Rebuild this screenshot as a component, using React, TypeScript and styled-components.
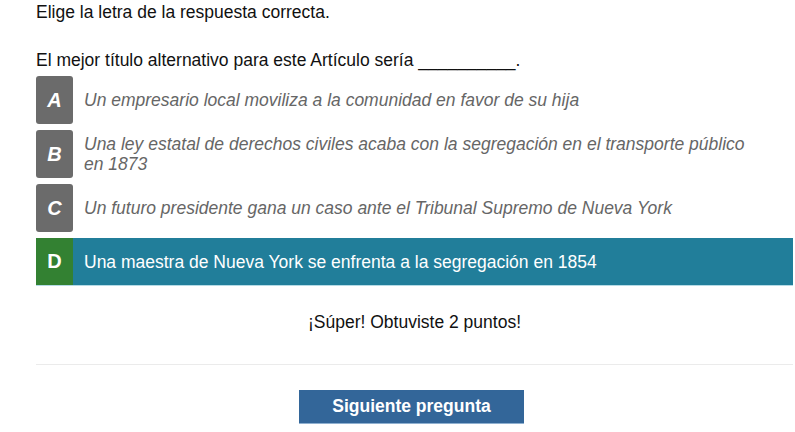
import styled, { createGlobalStyle, css } from 'styled-components'

const GlobalStyle = createGlobalStyle`
  body {
    margin: 0;
    background: #fff;
    font-family: "Liberation Sans", Arial, sans-serif;
    color: #111;
  }
`

const Quiz = styled.div`
  width: 757px;
  padding: 2px 0 0 36px;
  font-size: 17.5px;
`

const Prompt = styled.p`
  margin: 0;
  line-height: 20px;
`

const Question = styled.p`
  margin: 28px 0 6px;
  line-height: 20px;
`

const Options = styled.div`
  display: flex;
  flex-direction: column;
  gap: 6px;
`

const Option = styled.div<{ $correct?: boolean }>`
  display: grid;
  grid-template-columns: 37px 1fr;
  align-items: stretch;
  min-height: 48px;
  ${(p) =>
    p.$correct &&
    css`
      background: #217e9a;
      border-bottom: 1px solid #b5dbe6;
      min-height: 47px;
    `}
`

const Badge = styled.div<{ $correct?: boolean }>`
  display: flex;
  align-items: center;
  justify-content: center;
  background: ${(p) => (p.$correct ? '#338132' : '#6b6b6b')};
  border-radius: ${(p) => (p.$correct ? '0' : '3px')};
  color: #fff;
  font-weight: bold;
  font-style: ${(p) => (p.$correct ? 'normal' : 'italic')};
  font-size: 20px;
`

const OptionText = styled.div<{ $correct?: boolean }>`
  display: flex;
  align-items: center;
  padding: 0 40px 0 11px;
  line-height: 20px;
  font-style: ${(p) => (p.$correct ? 'normal' : 'italic')};
  color: ${(p) => (p.$correct ? '#fff' : '#666')};
`

const Feedback = styled.p`
  margin: 26px 0 0;
  text-align: center;
  line-height: 20px;
`

const Rule = styled.hr`
  margin: 32px 0 0;
  border: 0;
  border-top: 1px solid #ebebeb;
`

const Footer = styled.div`
  display: flex;
  justify-content: center;
  padding-top: 25px;
`

const NextButton = styled.button`
  width: 225px;
  height: 34px;
  margin-right: 6px;
  border: 0;
  border-bottom: 1px solid #8fb0d0;
  background: #336699;
  color: #fff;
  font-family: inherit;
  font-size: 17.5px;
  font-weight: bold;
  cursor: pointer;
`

const options = [
  { letter: 'A', text: 'Un empresario local moviliza a la comunidad en favor de su hija' },
  {
    letter: 'B',
    text: 'Una ley estatal de derechos civiles acaba con la segregación en el transporte público en 1873',
  },
  { letter: 'C', text: 'Un futuro presidente gana un caso ante el Tribunal Supremo de Nueva York' },
  { letter: 'D', text: 'Una maestra de Nueva York se enfrenta a la segregación en 1854', correct: true },
]

export default function App() {
  return (
    <>
      <GlobalStyle />
      <Quiz>
        <Prompt>Elige la letra de la respuesta correcta.</Prompt>
        <Question>El mejor título alternativo para este Artículo sería __________.</Question>
        <Options>
          {options.map((o) => (
            <Option key={o.letter} $correct={o.correct}>
              <Badge $correct={o.correct}>{o.letter}</Badge>
              <OptionText $correct={o.correct}>{o.text}</OptionText>
            </Option>
          ))}
        </Options>
        <Feedback>¡Súper! Obtuviste 2 puntos!</Feedback>
        <Rule />
        <Footer>
          <NextButton>Siguiente pregunta</NextButton>
        </Footer>
      </Quiz>
    </>
  )
}
